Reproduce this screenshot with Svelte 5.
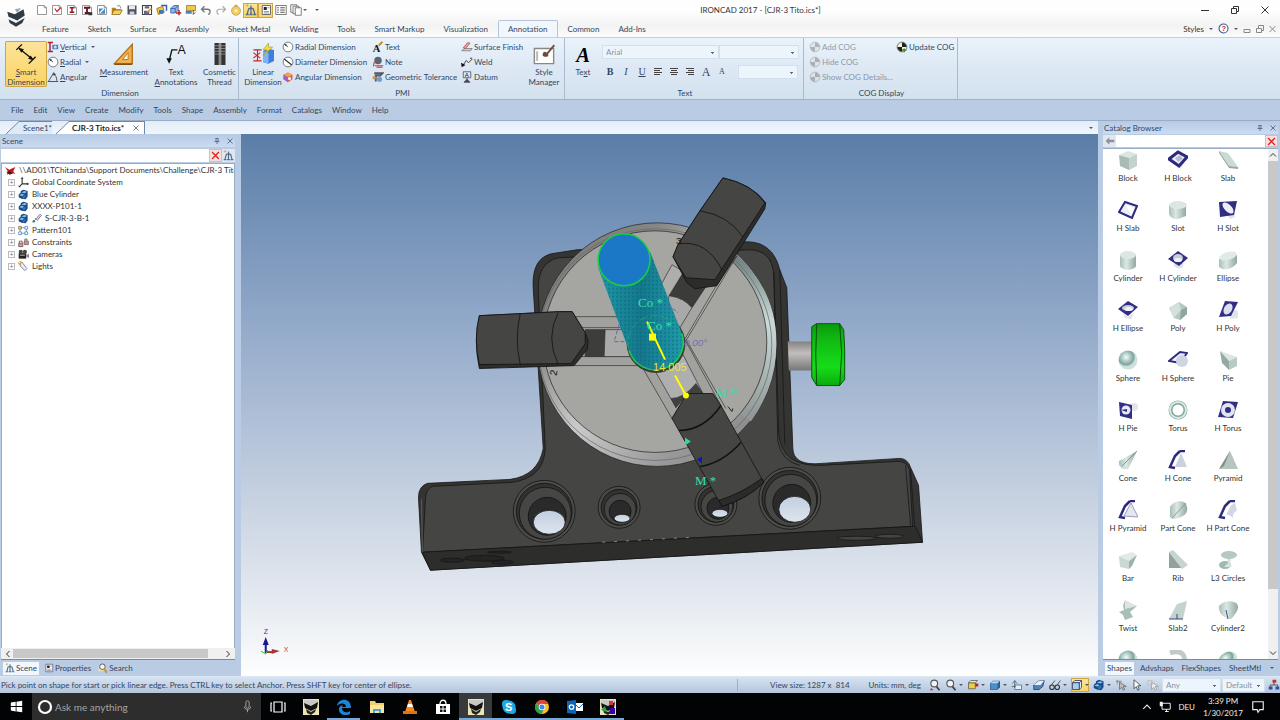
<script lang="ts">
    type Item = { icon: string; label: string; arrow?: boolean; disabled?: boolean };

    /*
     * small icons, 16 x 16
     */

    const cube =
        '<path d="M2 6l3-3h9v8l-3 3H2z" fill="#2d6aa8" stroke="#123c6b"/><path d="M2 6l3-3h9l-3 3z" fill="#bcdcf5"/><path d="M2 6h9v8H2z" fill="#4d8fcb"/>';
    const page =
        '<path d="M2 2h9l3 3v9H2z" fill="#fff" stroke="#777"/><path d="M11 2v3h3" fill="none" stroke="#777"/>';
    const part =
        '<path d="M1 8l3-3V3l4-2 6 2v8l-3 4-6-1-4-2z" fill="#174a86"/><path d="M5 5l4-2 4 1-3 2zM2 9l3-2 4 1-3 2z" fill="#8fc2ee"/><path d="M6 11l5-3v4l-3 2z" fill="#2c74bf"/>';
    const pie =
        '<circle cx="8" cy="8" r="6.5" fill="#ddd" stroke="#777"/><path d="M8 8V2a6 6 0 0 1 6 6zM8 8v6a6 6 0 0 1-6-6z" fill="#777"/>';
    const lens =
        '<circle cx="7" cy="6" r="4.5" fill="#eef5fb" stroke="#555" stroke-width="1.5"/><path d="M10 10l4 5" stroke="#444" stroke-width="2.5"/>';
    const hawk =
        '<path d="M0 0h16v16H0z" fill="#e9e5b9"/><path d="M1 1h14v4L8 8 1 4z" fill="#c9c9c4"/><path d="M1 4l7 3 7-4-1 6-6 3-6-3z" fill="#111"/><path d="M3 10l5 3 5-3-1 3-4 3-4-2z" fill="#222"/>';

    const icons: Record<string, string> = {
        logo: '<path d="M1 3l6 2 7-4 1 5-6 4-7-3z" fill="#2f3b45"/><path d="M2 9l6 3 7-4-2 4-5 3-5-3z" fill="#2f3b45"/><path d="M7 1l5-1-3 4z" fill="#9aa4ac"/>',
        page,
        pageCheck: page + '<path d="M5 6l3 4 5-5" fill="none" stroke="#c23" stroke-width="1.6"/>',
        pageI: page + '<path d="M5 5h6M5 11h6M8 5v6" stroke="#9b1420" stroke-width="2"/>',
        pageII: page + '<path d="M4 5h8M5 12h7M8 5v7" stroke="#68101a" stroke-width="2.4"/><path d="M10 11h5v4h-5z" fill="#333"/>',
        pageBlue: page + '<path d="M4 6h8v7H4z" fill="#3f8ccc"/><path d="M5 12l6-6" stroke="#fff" stroke-width="1.5"/>',
        open: '<path d="M1 5h5l1 2h6v6H1z" fill="#b98518"/><path d="M4 8h11l-3 6H1z" fill="#f5cf63" stroke="#8a6414"/><path d="M8 3c3-2 5 0 5 3" fill="none" stroke="#555"/>',
        save: '<path d="M2 2h12v12H2z" fill="#50525f"/><path d="M4 2h8v5H4z" fill="#e7e9f0"/><path d="M5 10h6v4H5z" fill="#cfd2dd"/>',
        saveAs: '<path d="M2 2h12v12H2z" fill="#fff" stroke="#445" stroke-width="1.5"/><path d="M5 3h6v3H5zM4 9h7v5H4z" fill="#667"/><path d="M8 11l6-5" stroke="#d7942a" stroke-width="2"/>',
        importIcon: '<path d="M1 6l8-3 2 8-8 3z" fill="#f4c542" stroke="#8a6a10"/><path d="M7 2h7v7" fill="none" stroke="#2b63ae" stroke-width="2"/><path d="M4 8h6v5H4z" fill="#3f76bd"/>',
        addPart: '<path d="M1 6l4-4h6v6l-4 4H1z" fill="#8db7e8" stroke="#2a55a0"/><path d="M1 6h6v6M7 6l4-4" fill="none" stroke="#2a55a0"/><path d="M12 8v7M8 12h7" stroke="#b22" stroke-width="2"/>',
        library: '<path d="M2 2h12v7H2z" fill="#f3c646" stroke="#94741c"/><path d="M1 9h8v4H1z" fill="#4c83bf"/><path d="M11 8v6l3-3" fill="none" stroke="#333"/>',
        undo: '<path d="M6 3L2 7l4 4M2 7h8c5 0 4 6 1 7" fill="none" stroke="#777" stroke-width="1.8"/>',
        redo: '<path d="M10 3l4 4-4 4M14 7H6c-5 0-4 6-1 7" fill="none" stroke="#aaa" stroke-width="1.6"/>',
        ball: '<circle cx="8" cy="9" r="6" fill="#f4cc62" stroke="#c09a3c"/><circle cx="8" cy="9" r="2" fill="#fff3c6"/><path d="M6 1h4v3H6z" fill="#c8a95a"/>',
        tree: '<path d="M8 2v4M5 6h6M5 6l-2 7M8 6v7M11 6l2 7M1 14h4M6 14h4M11 14h4" fill="none" stroke="#4a6c8e" stroke-width="1.7"/><path d="M1 2h4M3 0v4" stroke="#e3a51c"/>',
        props: '<path d="M3 2h11v12H3z" fill="#fff" stroke="#445"/><path d="M5 4h4v4H5z" fill="#223"/><path d="M10 5h3M5 10h7M5 12h7" stroke="#778"/>',
        list: '<path d="M1 2h14v12H1z" fill="#fff" stroke="#555"/><path d="M3 5h2M3 8h2M3 11h2M7 5h6M7 8h6M7 11h6" stroke="#555" stroke-width="1.4"/>',
        copy: '<path d="M1 1h8v10H1z" fill="#fff" stroke="#555"/><path d="M4 3h8v10H4z" fill="#fff" stroke="#555"/><path d="M7 5h8v10H7z" fill="#fff" stroke="#555"/>',
        smart: '<path d="M3 4l10 8" stroke="#111" stroke-width="1"/><path d="M1 5l4-4M10 15l5-5" stroke="#111" stroke-width="1"/><path d="M2.500 3.500l4 1-2 2.500zM13.500 12.500l-4-1 2-2.500z" fill="#111"/>',
        vertical: '<path d="M1 2h7M1 14h7M4 2v12" stroke="#b2232a" stroke-width="2"/><path d="M7 5h8v6H7z" fill="#4d82bb"/><circle cx="11" cy="8" r="2" fill="#c6def5"/>',
        radial: '<circle cx="8" cy="8" r="6.500" fill="#fff" stroke="#555"/><path d="M8 8L3 4" stroke="#333"/><path d="M3 4l4 1-2 2z" fill="#333"/>',
        diameter: '<circle cx="8" cy="8" r="6.500" fill="#fff" stroke="#555"/><path d="M3 4l10 8" stroke="#333" stroke-width="1.500"/>',
        angular: '<path d="M1 14h14M2 14l7-12M9 4c3 2 4 5 4 9" fill="none" stroke="#444" stroke-width="1.200"/><path d="M9 2l3 3-4 1z" fill="#333"/>',
        measure: '<path d="M1 15L14 1v14z" fill="#f0b24e" stroke="#b36f15"/><path d="M7 12l4-5v5z" fill="#fdf3d9" stroke="#b36f15" stroke-width=".6"/><path d="M1 15h13v1H1z" fill="#84500f"/>',
        annotate: '<text x="9" y="8" font-size="9" font-family="Liberation Sans, sans-serif" fill="#111">A</text><path d="M9 5H5L3 13" fill="none" stroke="#111"/><path d="M1 11h4l-2 4z" fill="#111"/>',
        thread: '<path d="M4 0h8v16H4z" fill="#333"/><path d="M7 0h2v16H7z" fill="#888"/><path d="M4 2h8M4 4h8M4 6h8M4 8h8" stroke="#aaa" stroke-width=".5"/>',
        linear: '<path d="M8 6l3-2 5 1v8l-4 2-4-1z" fill="#3c7ee0"/><path d="M8 6l4 1v8l-4-1z" fill="#80b2f5"/><path d="M12 0L8 5h3L8 9l7-6h-3z" fill="#f7df3c" stroke="#a08a10" stroke-width=".4"/><path d="M1 5h6M1 13h6M4 5v8M1 7l5 4M6 7l-5 4" stroke="#c22" stroke-width=".8" fill="none"/>',
        angDim: '<path d="M2 5l6-3 6 3v6l-6 4-6-4z" fill="#d86262"/><path d="M2 5l6 3v7l-6-4z" fill="#9c62c4"/><path d="M8 2l6 3-6 3-6-3z" fill="#f4a33f"/><circle cx="10" cy="10" r="2" fill="#fff"/>',
        textA: '<text x="1" y="14" font-size="14" font-weight="700" font-family="Liberation Serif, serif" fill="#111">A</text><path d="M9 6l5-5" stroke="#c58b2c" stroke-width="2.500"/>',
        note: '<circle cx="8" cy="6" r="5" fill="#5a6674"/><path d="M3 8l-1 6M4 13h11M6 15h8" stroke="#c33" stroke-width="1.500"/>',
        tolerance: '<path d="M3 3h11l-3 3H5v8" fill="none" stroke="#556" stroke-width="2.500"/><circle cx="10" cy="11" r="3.500" fill="#6ea0d0"/><path d="M1 7h4v4H1z" fill="#c69a3a"/>',
        surface: '<path d="M1 13h12l2-3H4z" fill="#ccc" stroke="#777"/><path d="M3 9l6-7 3 1-6 7z" fill="#e9a39a" stroke="#b44"/>',
        weld: '<path d="M3 12l4-6 3 3 5-5M12 3h3" fill="none" stroke="#333" stroke-width="1.200"/><path d="M0 9l6 3-5 3z" fill="#111"/>',
        datum: '<path d="M3 1h10v8H3z" fill="#dfe8f3" stroke="#445"/><text x="5" y="8" font-size="8" font-family="Liberation Sans, sans-serif" fill="#111">A</text><path d="M8 9v3M4 15l4-4 4 4z" fill="#445" stroke="#445"/>',
        styleMgr: '<path d="M1 4h14v11H1z" fill="#fff" stroke="#888"/><path d="M3 6v7" stroke="#bbb" stroke-width="1.500"/><path d="M7 9c0-3 2-3 3-2l5-6 1 1-5 6c1 2-2 3-4 1z" fill="#6d4c3d"/>',
        bigA: '<text x="3" y="14" font-size="15" font-weight="700" font-style="italic" font-family="Liberation Serif, serif" fill="#000">A</text>',
        cog: pie,
        cogColor: '<circle cx="8" cy="8" r="6.500" fill="#f2f2d8" stroke="#555"/><path d="M8 8V2a6 6 0 0 1 6 6zM8 8v6a6 6 0 0 1-6-6z" fill="#222"/><path d="M11 10v5M8 12h6" stroke="#4b8a34" stroke-width="2"/>',
        scene: '<path d="M0 3l6 4 9-4-3 6 3 4-6-2-6 3 1-5z" fill="#c3161c"/><path d="M2 10l5-1 5 3-5 2z" fill="#5c0e10"/>',
        axes: '<path d="M6 1v9M6 10h9M6 10l-4 4" stroke="#333" stroke-width="1.600"/><path d="M4 3l2-3 2 3zM13 8l3 2-3 2zM1 12v3h3z" fill="#333"/>',
        part,
        pin: '<path d="M1 15l5-5M5 8l4 4M7 9l4-5 2-2 2 2-2 2-4 5" fill="#eef" stroke="#445" stroke-width="1.200"/><circle cx="3" cy="13" r="2" fill="#386"/>',
        pattern: '<path d="M1 2h4v4H1z" fill="#f4d54a" stroke="#765"/><path d="M10 2h4v4h-4zM1 10h4v4H1zM10 10h4v4h-4z" fill="#fff" stroke="#37b"/><path d="M5 4h5M3 6v4M12 6v4M5 12h5" stroke="#37b"/>',
        constraints: '<path d="M1 9h6v5H1zM9 6h6v5H9z" fill="#c99" stroke="#644"/><path d="M2 9V6h4v3M10 6V3h3v3" fill="none" stroke="#755" stroke-width="1.300"/>',
        camera: '<path d="M1 6h11v8H1z" fill="#222"/><circle cx="4" cy="4" r="3" fill="#444"/><circle cx="10" cy="4" r="3" fill="#444"/><path d="M12 9l4-2v6l-4-2zM3 8h7v2H3z" fill="#888"/>',
        light: '<path d="M3 3l3-1 7 9-3 3-6-6z" fill="#e8edf5" stroke="#567"/><path d="M0 2l4 5M2 0l5 3" stroke="#d9a326" stroke-width="1.500"/>',
        redX: '<path d="M3 3l10 10M13 3L3 13" stroke="#d3282b" stroke-width="2"/>',
        back: '<path d="M1 8l6-6v4h8v4H7v4z" fill="#8d9196"/>',
        pinSmall: '<path d="M5 3h6M6 3v6M10 3v6M3 9h10M8 9v5" stroke="#445a75" stroke-width="1.500" fill="none"/>',
        close: '<path d="M3 3l10 10M13 3L3 13" stroke="#445a75" stroke-width="1.600"/>',
        search: '<path d="M1 4h7v9H1z" fill="#f3e6c0"/>' + lens + '<path d="M9 9l5 6" stroke="#d79a2b" stroke-width="3"/>',
        lens,
        zoomIn: lens + '<path d="M3 12l-2 3h5z" fill="#c33"/>',
        sceneCam: '<path d="M2 5h9v8H2z" fill="#f0cf3c" stroke="#555"/><path d="M2 5l3-3h9l-3 3z" fill="#fbeea2" stroke="#555"/><path d="M11 6h4v4h-4z" fill="#b22"/>',
        cube,
        move: '<path d="M5 8h9v6H5z" fill="#e6eef7" stroke="#567"/><path d="M5 12V3M2 6l3-4 3 4M1 10h5" fill="none" stroke="#356"/>',
        wedge: '<path d="M1 8l6-5 8-1-2 8-5 4H1z" fill="#4b86bf" stroke="#234"/><path d="M1 8l6-5 8-1-5 6z" fill="#e7f1fb"/>',
        glasses: '<circle cx="4" cy="11" r="3" fill="none" stroke="#333" stroke-width="1.500"/><circle cx="11" cy="11" r="3" fill="none" stroke="#333" stroke-width="1.500"/><path d="M3 8l5-6M11 8l4-6" stroke="#333"/>',
        cubeEdge: '<path d="M2 5l3-3h9v9l-3 3V5zM11 5l3-3" fill="#d8ebfb" stroke="#235"/><path d="M2 5h9v9H2z" fill="#a9cdee" stroke="#235"/>',
        select: '<path d="M1 3h8M3 1v6" stroke="#777"/><path d="M6 4v10l3-3 2 4 2-1-2-4h4z" fill="#bbb" stroke="#666"/>',
        cursor: '<path d="M4 1v12l3-3 2 5 2-1-2-5h4z" fill="#fff" stroke="#333"/>',
        filter: '<path d="M6 4v10l3-3 2 4 2-1-2-4h4z" fill="#eee" stroke="#999"/><path d="M1 2h6v6H1z" fill="none" stroke="#bbb"/>',
        org: '<path d="M6 1h5v4H6z" fill="#b33"/><path d="M1 10h5v4H1zM10 10h5v4h-5z" fill="#2c4da0"/><path d="M8 5v3M3 10V8h10v2" fill="none" stroke="#333"/>',
        help: '<circle cx="8" cy="8" r="6.500" fill="#fff" stroke="#345a9b" stroke-width="1.600"/><text x="5" y="12" font-size="11" font-weight="700" font-family="Liberation Sans, sans-serif" fill="#c22">?</text>',
        windows: '<path d="M1 3l6-1v5.500H1zM8 2l7-1v6.500H8zM1 8.500h6V14l-6-1zM8 8.500h7V15l-7-1z" fill="#fff"/>',
        ring: '<circle cx="8" cy="8" r="6" fill="none" stroke="#fff" stroke-width="2.200"/>',
        mic: '<rect x="6" y="1" width="4" height="9" rx="2" fill="none" stroke="#bbb"/><path d="M4 8c0 5 8 5 8 0M8 12v3" fill="none" stroke="#bbb"/>',
        taskView: '<path d="M4 3h8v10H4zM2 4H1v8h1M14 4h1v8h-1" fill="none" stroke="#fff" stroke-width="1.200"/>',
        hawk,
        hawkColor: hawk + '<path d="M10 9h5v6h-5z" fill="#30a"/><path d="M1 11l4-4 2 6z" fill="#2a4"/><path d="M9 2h4v4H9z" fill="#d33"/>',
        edge: '<path d="M1 7c1-8 14-9 14 2H6c0 5 6 5 8 3v3c-5 3-12 0-11-6 1-2 3-3 4-3-1 1-1 2-1 2h4c0-5-7-4-9-1z" fill="#1787dc"/>',
        folder: '<path d="M1 2h5l1 2h8v10H1z" fill="#f2cf6c"/><path d="M1 6h14v8H1z" fill="#fbe59b"/><path d="M4 10h8v4h-2v-2H6v2H4z" fill="#4ba4dc"/>',
        vlc: '<path d="M7 1h2l4 12H3z" fill="#f28a1e"/><path d="M6 5h4l1 3H5z" fill="#fff"/><path d="M1 12h14v3H1z" fill="#e5700e"/>',
        store: '<path d="M1 5h14v10H1z" fill="#fff"/><path d="M5 5c0-5 6-5 6 0" fill="none" stroke="#fff" stroke-width="1.300"/><path d="M5 7h2.500v2.500H5zM8.500 7H11v2.500H8.500zM5 10.500h2.500V13H5zM8.500 10.500H11V13H8.500z" fill="#111"/>',
        skype: '<circle cx="8" cy="8" r="6.500" fill="#1ca8e8"/><circle cx="5" cy="5" r="4" fill="#1ca8e8"/><circle cx="11" cy="11" r="4" fill="#1ca8e8"/><text x="4" y="12" font-size="11" font-weight="700" font-family="Liberation Sans, sans-serif" fill="#fff">S</text>',
        chrome: '<circle cx="8" cy="8" r="7" fill="#fbc116"/><path d="M8 8L2 4.500A7 7 0 0 1 14.500 5H8z" fill="#df4435"/><path d="M8 8L1.800 4.700A7 7 0 0 0 7.500 15L10 10z" fill="#2da14f"/><circle cx="8" cy="8" r="3.300" fill="#fff"/><circle cx="8" cy="8" r="2.500" fill="#4285f4"/>',
        outlook: '<path d="M8 4h8v8H8z" fill="#fff"/><path d="M8 5l4 4 4-4" fill="none" stroke="#0b66b8"/><path d="M0 2l9-1v14l-9-1z" fill="#0b66b8"/><circle cx="4.500" cy="8" r="2.200" fill="none" stroke="#fff" stroke-width="1.300"/>',
        up: '<path d="M2 11l6-6 6 6" fill="none" stroke="#eee" stroke-width="1.800"/>',
        net: '<path d="M4 3h11v8H4zM8 14h5M10 11v3" fill="none" stroke="#eee" stroke-width="1.300"/><path d="M1 1h4v6H1z" fill="#eee"/>',
        notice: '<path d="M2 2h12v9h-4l-2 3-1-3H2z" fill="none" stroke="#eee" stroke-width="1.300"/>',
    };

    /*
     * catalog shapes, 20 x 20
     */

    const frame = '<path d="M1 9L10 2l9 5-8 9z" fill="#eceefa" stroke="#2c2a7c" stroke-width="3"/>';
    const hollow = '<path d="M1 2l18-1-3 14-14 2z" fill="#312e84"/>';
    const wall = '<path d="M12 1h5M12 1L7 6 2 17l5 1" fill="none" stroke="#2c2a7c" stroke-width="2.500"/>';

    const shapes = [
        { name: "Block", art: '<path d="M1 5l9-4 9 3-8 4z" fill="#dbe5e1"/><path d="M1 5l10 3v12L2 16z" fill="#a8bbb5"/><path d="M11 8l8-4v12l-8 4z" fill="#c3d2cc"/>' },
        { name: "H Block", art: '<path d="M9 12l4 7 5-10z" fill="#e4e6ee"/>' + frame + '<path d="M7 8l5-3 3 4-5 3z" fill="#b7bccb"/>' },
        { name: "Slab", art: '<path d="M1 1l9 2 10 14-9-1z" fill="#cbdad4"/><path d="M1 1v2l10 15v-2zM11 16l9 1v2l-9-1z" fill="#93a9a1"/>' },
        { name: "H Slab", art: '<path d="M7 2l12 4-5 12L1 12z" fill="#eceefa" stroke="#2c2a7c" stroke-width="2"/><path d="M8 5l8 3-3 7z" fill="#fff"/>' },
        { name: "Slot", art: '<path d="M1 5v9c2 5 6 5 9 5l8-3V6z" fill="url(#steel)"/><ellipse cx="10" cy="5" rx="9" ry="4" fill="#dce7e2"/>' },
        { name: "H Slot", art: '<path d="M9 14l3 5 5-2-1-5z" fill="#dfe2ea"/>' + hollow + '<ellipse cx="10" cy="8" rx="7" ry="3.500" transform="rotate(45 10 8)" fill="#eceefa"/>' },
        { name: "Cylinder", art: '<path d="M2 5v11c2 5 14 5 16 0V5z" fill="url(#steel)"/><ellipse cx="10" cy="5" rx="8" ry="4" fill="#dce7e2"/>' },
        { name: "H Cylinder", art: '<path d="M6 10h9v7q-5 3-9-1z" fill="#dddfea"/><path d="M0 9l10-8 10 7-9 8z" fill="#312e84"/><ellipse cx="10" cy="8" rx="5" ry="4" fill="#c9ccd9"/><ellipse cx="10" cy="10" rx="4" ry="2" fill="#f2f3f8"/>' },
        { name: "Ellipse", art: '<path d="M1 9v8c6 5 14 1 18-4V5z" fill="url(#steel)"/><ellipse cx="10" cy="6" rx="9" ry="4" transform="rotate(-15 10 6)" fill="#e0eae6"/>' },
        { name: "H Ellipse", art: '<path d="M5 13l5 4 6-4-3 6-6-1z" fill="#dddfea"/><path d="M0 9l10-8 10 6-10 9z" fill="#312e84"/><ellipse cx="10" cy="8" rx="6" ry="3" fill="#c9ccd9"/><ellipse cx="11" cy="9" rx="4" ry="2" fill="#f2f3f8"/>' },
        { name: "Poly", art: '<path d="M1 8l10-6 8 5v7l-7 6-6-2z" fill="#b4c7c0"/><path d="M1 8l10-6 2 8-7 8z" fill="#d3e0db"/><path d="M13 10l6-3v7l-7 6z" fill="#8fa59d"/>' },
        { name: "H Poly", art: '<path d="M13 9l7 2v7l-8 1z" fill="#e2e4ec"/><path d="M7 1l13 1-7 14-12 1z" fill="#312e84"/><ellipse cx="10" cy="9" rx="4" ry="6" transform="rotate(30 10 9)" fill="#dcdfee"/>' },
        { name: "Sphere", art: '<circle cx="10" cy="10" r="9.500" fill="url(#ball)"/>' },
        { name: "H Sphere", art: '<path d="M1 11L12 2l7 1-7 10z" fill="#eef" stroke="#2c2a7c" stroke-width="2"/><circle cx="14" cy="11" r="6" fill="#d0d4e2"/>' },
        { name: "Pie", art: '<path d="M2 1l17 6-8 4z" fill="#dbe6e1"/><path d="M2 1l9 10v9L4 13z" fill="#94aaa2"/><path d="M11 11l8-4v9l-8 4z" fill="#b9cac4"/>' },
        { name: "H Pie", art: '<circle cx="16" cy="7" r="4" fill="#e3e4e8"/><path d="M1 2l13 3v14L2 16z" fill="#312e84"/><circle cx="8" cy="10" r="4.500" fill="#e7e9f4"/><path d="M3 10l6-1v3z" fill="#312e84"/>' },
        { name: "Torus", art: '<circle cx="10" cy="10" r="7.500" fill="none" stroke="#7fa59b" stroke-width="4"/><circle cx="10" cy="10" r="8" fill="none" stroke="#d9e9e4" stroke-width="2"/>' },
        { name: "H Torus", art: '<path d="M5 1l15 1-5 16-15-1z" fill="#312e84"/><circle cx="10" cy="10" r="5" fill="none" stroke="#e2e4f0" stroke-width="4"/>' },
        { name: "Cone", art: '<path d="M19 1L1 11c-1 6 4 9 9 8z" fill="url(#steel)"/><path d="M19 1L4 16" stroke="#7f9b92"/>' },
        { name: "H Cone", art: wall + '<path d="M13 3L7 17h12z" fill="#ccd1e2"/>' },
        { name: "Pyramid", art: '<path d="M12 1L1 19h19z" fill="#b8c4bf"/><path d="M12 1L1 19l5-3z" fill="#7f918a"/>' },
        { name: "H Pyramid", art: wall + '<path d="M13 3L6 16l14 1z" fill="#e5e7f0" stroke="#9a9cba"/>' },
        { name: "Part Cone", art: '<path d="M2 7C6 0 16 0 18 4s2 9-3 12-11 4-13 1z" fill="url(#steel)"/><path d="M18 3L4 18" stroke="#86a198"/>' },
        { name: "H Part Cone", art: wall + '<path d="M17 3c-5 2-5 5-9 12 4-1 5 2 7 3 0-5 2-7 4-7z" fill="#d3d6e4"/>' },
        { name: "Bar", art: '<path d="M1 6l13-4 5 3-8 6z" fill="#e1eae6"/><path d="M1 6l10 5v8L2 17z" fill="#c9d8d3"/><path d="M11 11l8-6-5 11-3 3z" fill="#9fb3ac"/>' },
        { name: "Rib", art: '<path d="M1 2l13 16H1z" fill="#91a29c"/><path d="M1 2l4-2 15 15-6 4z" fill="#c8d4cf"/>' },
        { name: "L3 Circles", art: '<ellipse cx="7" cy="15" rx="6" ry="4" fill="#9fbab1"/><path d="M9 8h4l-1 5 2 4H6l4-4z" fill="#d7e3df"/><ellipse cx="11" cy="5" rx="8" ry="4" fill="#b5c8c1"/>' },
        { name: "Twist", art: '<path d="M7 0l3 4 9 2-7 6 3 5-8 3-2-5-4-3 5-2-1-4z" fill="#a9beb6"/><path d="M7 0l12 6-12 3z" fill="#dbe6e1"/>' },
        { name: "Slab2", art: '<path d="M9 4l10-3-4 18H1z" fill="#c4d3ce"/><path d="M1 19h14M9 19v-5" stroke="#38447f"/>' },
        { name: "Cylinder2", art: '<path d="M1 6C5 0 16 0 19 4s-1 10-6 15C6 19 0 13 1 6z" fill="url(#steel)"/><path d="M8 10l2 9" stroke="#414b96"/>' },
        { name: "", art: '<circle cx="10" cy="10" r="9.500" fill="url(#ball)"/>' },
        { name: "", art: '<path d="M2 3c12-4 17 2 14 15" fill="none" stroke="#c1cbc7" stroke-width="5"/>' },
        { name: "", art: '<ellipse cx="10" cy="9" rx="9.500" ry="7" transform="rotate(-25 10 9)" fill="url(#ball)"/>' },
    ];

    const quickAccess = ["page", "pageCheck", "pageI", "pageII", "pageBlue", "open", "save", "saveAs", "importIcon", "addPart", "library", "undo", "redo", "ball", "tree", "props", "list", "copy"];
    const ribbonTabs = ["Feature", "Sketch", "Surface", "Assembly", "Sheet Metal", "Welding", "Tools", "Smart Markup", "Visualization", "Annotation", "Common", "Add-Ins"];
    const menus = ["File", "Edit", "View", "Create", "Modify", "Tools", "Shape", "Assembly", "Format", "Catalogs", "Window", "Help"];

    const dimensions: Item[] = [
        { icon: "vertical", label: "&Vertical", arrow: true },
        { icon: "radial", label: "&Radial", arrow: true },
        { icon: "angular", label: "&Angular" },
    ];
    const pmi: Item[][] = [
        [
            { icon: "radial", label: "Radial Dimension" },
            { icon: "diameter", label: "Diameter Dimension" },
            { icon: "angDim", label: "Angular Dimension" },
        ],
        [
            { icon: "textA", label: "Text" },
            { icon: "note", label: "Note" },
            { icon: "tolerance", label: "Geometric Tolerance" },
        ],
        [
            { icon: "surface", label: "Surface Finish" },
            { icon: "weld", label: "Weld" },
            { icon: "datum", label: "Datum" },
        ],
    ];
    const cog: Item[][] = [
        [
            { icon: "cog", label: "Add COG", disabled: true },
            { icon: "cog", label: "Hide COG", disabled: true },
            { icon: "cog", label: "Show COG Details...", disabled: true },
        ],
        [{ icon: "cogColor", label: "Update COG" }],
    ];

    const nodes = [
        { icon: "axes", label: "Global Coordinate System" },
        { icon: "part", label: "Blue Cylinder" },
        { icon: "part", label: "XXXX-P101-1" },
        { icon: "part", label: "S-CJR-3-B-1", pinned: true },
        { icon: "pattern", label: "Pattern101" },
        { icon: "constraints", label: "Constraints" },
        { icon: "camera", label: "Cameras" },
        { icon: "light", label: "Lights" },
    ];

    const viewTools = [
        { icon: "zoomIn" },
        { icon: "lens", arrow: true },
        { icon: "sceneCam", arrow: true },
        { icon: "cube", arrow: true },
        { icon: "move", arrow: true },
        { icon: "wedge" },
        { icon: "glasses", arrow: true },
        { icon: "cubeEdge", arrow: true, on: true },
        { icon: "part", arrow: true },
        { icon: "select" },
        { icon: "cursor" },
        { icon: "filter" },
    ];

    const apps = [
        { icon: "taskView" },
        { icon: "hawk" },
        { icon: "edge", running: true },
        { icon: "folder" },
        { icon: "vlc" },
        { icon: "store" },
        { icon: "hawk", running: true, active: true },
        { icon: "skype", running: true },
        { icon: "chrome", running: true },
        { icon: "outlook", running: true },
        { icon: "hawkColor", running: true },
    ];

    const holes = [
        { x: 544, y: 512, r: 31, ix: 547, iy: 517, ir: 19, wx: 549, wy: 523, rx: 16, ry: 12 },
        { x: 619, y: 508, r: 21, ix: 620, iy: 512, ir: 11, wx: 622, wy: 519, rx: 8, ry: 4 },
        { x: 716, y: 505, r: 21, ix: 718, iy: 509, ir: 11, wx: 720, wy: 514, rx: 8, ry: 4 },
        { x: 790, y: 499, r: 31, ix: 792, iy: 504, ir: 19, wx: 795, wy: 510, rx: 16, ry: 13 },
    ];

    let activeTab = $state("Annotation");
</script>

{#snippet icon(name: string, size = 12)}
    <svg class="icon" width={size} height={size} viewBox="0 0 16 16" aria-hidden="true">{@html icons[name]}</svg>
{/snippet}

{#snippet caption(text: string)}
    {@const at = text.indexOf("&")}
    {#if at < 0}{text}{:else}{text.slice(0, at)}<u>{text[at + 1]}</u>{text.slice(at + 2)}{/if}
{/snippet}

{#snippet large(name: string, lines: string[], on = false)}
    <button class="large" class:on>
        {@render icon(name, 22)}
        <span>
            {#each lines as line, i}
                {#if i}<br />{/if}{@render caption(line)}
            {/each}
        </span>
    </button>
{/snippet}

{#snippet stack(items: Item[])}
    <div class="stack">
        {#each items as item}
            <button class="small" disabled={item.disabled}>
                {@render icon(item.icon)}
                <span>{@render caption(item.label)}</span>
                {#if item.arrow}<i class="arrow"></i>{/if}
            </button>
        {/each}
    </div>
{/snippet}

<div class="app">
    <header>
        <div class="logo">{@render icon("logo", 20)}</div>
        <div class="head-rows">
            <div class="title-row">
                <div class="quick">
                    {#each quickAccess as name}
                        <button class:on={name === "tree" || name === "props"} aria-label={name}>{@render icon(name)}</button>
                    {/each}
                    <i class="arrow"></i>
                    <i class="arrow more"></i>
                </div>
                <h1>IRONCAD 2017 - [CJR-3 Tito.ics*]</h1>
                <div class="window-buttons">
                    <button aria-label="Minimize"><svg width="8" height="8"><path d="M0 4.500h8" stroke="#333" /></svg></button>
                    <button aria-label="Restore"><svg width="8" height="8"><path d="M.5 2.500h5v5h-5zM2.500 2V.5h5v5H6" fill="none" stroke="#333" /></svg></button>
                    <button aria-label="Close"><svg width="8" height="8"><path d="M.5.5l7 7M7.500.5l-7 7" stroke="#333" /></svg></button>
                </div>
            </div>
            <nav class="ribbon-tabs">
                {#each ribbonTabs as tab}
                    <button class:active={tab === activeTab} onclick={() => (activeTab = tab)}>{tab}</button>
                {/each}
                <div class="styles">
                    <button>Styles</button>
                    <i class="arrow"></i>
                    {@render icon("help", 11)}
                    <i class="arrow"></i>
                    <svg width="34" height="8"><path d="M1 4.500h6v3H1zM13.500 3.500h5v4h-5zM15.500 3V.5h5v5H19M26.500 1l6 6M32.500 1l-6 6" fill="none" stroke="#888" /></svg>
                </div>
            </nav>
        </div>
    </header>

    <section class="ribbon">
        <div class="group dimension">
            <div class="items">
                {@render large("smart", ["&Smart", "Dimension"], true)}
                {@render stack(dimensions)}
                {@render large("measure", ["&Measurement"])}
                {@render large("annotate", ["Text", "&Annotations"])}
                {@render large("thread", ["Cosmetic", "Thread"])}
            </div>
            <h2>Dimension</h2>
        </div>
        <div class="group pmi">
            <div class="items">
                {@render large("linear", ["Linear", "Dimension"])}
                {#each pmi as items}
                    {@render stack(items)}
                {/each}
                {@render large("styleMgr", ["Style", "Manager"])}
            </div>
            <h2>PMI</h2>
        </div>
        <div class="group text">
            <div class="items">
                {@render large("bigA", ["Te&xt"])}
                <div class="font-box">
                    <div class="font-row">
                        <select class="family" aria-label="Font"><option>Arial</option></select>
                        <select class="size" aria-label="Font size"><option></option></select>
                    </div>
                    <div class="font-row">
                        <button><b>B</b></button>
                        <button><em>I</em></button>
                        <button><u>U</u></button>
                        <button aria-label="Align left"><svg width="8" height="8"><path d="M0 .5h8M0 2.500h6M0 4.500h8M0 6.500h6" stroke="#444" /></svg></button>
                        <button aria-label="Align center"><svg width="8" height="8"><path d="M0 .5h8M1 2.500h6M0 4.500h8M1 6.500h6" stroke="#444" /></svg></button>
                        <button aria-label="Align right"><svg width="8" height="8"><path d="M0 .5h8M2 2.500h6M0 4.500h8M2 6.500h6" stroke="#444" /></svg></button>
                        <button class="grow">A</button>
                        <button class="shrink">A</button>
                        <select class="color" aria-label="Text colour"><option></option></select>
                    </div>
                </div>
            </div>
            <h2>Text</h2>
        </div>
        <div class="group cog">
            <div class="items">
                {#each cog as items}
                    {@render stack(items)}
                {/each}
            </div>
            <h2>COG Display</h2>
        </div>
    </section>

    <nav class="menu-bar">
        {#each menus as menu}
            <button>{menu}</button>
        {/each}
    </nav>

    <main>
        <div class="documents">
            <div class="doc-tabs">
                <svg width="23" height="13"><path d="M6 13L19 1h4v12z" fill="#dfeaf7" /><path d="M6 13L19 .5h4" fill="none" stroke="#6d87a6" /></svg>
                <button class="doc">Scene1*</button>
                <svg width="20" height="13"><path d="M4 13L17 1h3v12z" fill="#fff" /><path d="M4 13L17 .5h3" fill="none" stroke="#6d87a6" /></svg>
                <button class="doc active">CJR-3 Tito.ics* {@render icon("close", 8)}</button>
                <i class="arrow"></i>
            </div>

            <div class="work">
                <aside class="scene">
                    <div class="panel-title">
                        <span>Scene</span>
                        {@render icon("pinSmall", 8)}
                        {@render icon("close", 8)}
                    </div>
                    <div class="find">
                        <input type="text" aria-label="Find in scene" />
                        <button class="clear" aria-label="Clear">{@render icon("redX", 11)}</button>
                        <button aria-label="Tree">{@render icon("tree", 11)}</button>
                    </div>
                    <div class="tree">
                        <div class="root">{@render icon("scene", 11)} \\AD01\TChitanda\Support Documents\Challenge\CJR-3 Tito.ics</div>
                        <ul>
                            {#each nodes as node}
                                <li>
                                    <button class="expand" aria-label="Expand {node.label}">+</button>
                                    {@render icon(node.icon, 11)}
                                    {#if node.pinned}{@render icon("pin", 10)}{/if}
                                    <span>{node.label}</span>
                                </li>
                            {/each}
                        </ul>
                    </div>
                    <div class="scroll-x">
                        <svg width="6" height="8"><path d="M4.500 1l-3 3 3 3" fill="none" stroke="#333" /></svg>
                        <div class="thumb"></div>
                        <svg width="6" height="8"><path d="M1.500 1l3 3-3 3" fill="none" stroke="#333" /></svg>
                    </div>
                    <div class="panel-tabs">
                        <button class="active">{@render icon("tree", 10)} Scene</button>
                        <button>{@render icon("props", 10)} Properties</button>
                        <button>{@render icon("search", 10)} Search</button>
                    </div>
                </aside>

                <div class="viewport">
                    <svg viewBox="241 134 857 543" role="img" aria-label="Chuck assembly">
                        <defs>
                            <linearGradient id="rim" x1="0" y1="0" x2="1" y2="1">
                                <stop offset="0" stop-color="#777775" />
                                <stop offset=".25" stop-color="#858583" />
                                <stop offset=".5" stop-color="#c9cac9" />
                                <stop offset=".75" stop-color="#9a9a9c" />
                                <stop offset="1" stop-color="#7c7c7c" />
                            </linearGradient>
                            <linearGradient id="rimSide" x1="0" y1="0" x2="0" y2="1">
                                <stop offset="0" stop-color="#6d7c7c" />
                                <stop offset=".4" stop-color="#cadbd9" />
                                <stop offset="1" stop-color="#8e9594" />
                            </linearGradient>
                            <linearGradient id="shaft" x1="0" y1="0" x2="0" y2="1">
                                <stop offset="0" stop-color="#858383" />
                                <stop offset=".4" stop-color="#c2bebd" />
                                <stop offset="1" stop-color="#777" />
                            </linearGradient>
                            <linearGradient id="knob" x1="0" y1="0" x2="0" y2="1">
                                <stop offset="0" stop-color="#079a09" />
                                <stop offset=".25" stop-color="#11b913" />
                                <stop offset=".7" stop-color="#16dc18" />
                                <stop offset="1" stop-color="#0bab0d" />
                            </linearGradient>
                            <linearGradient id="steel">
                                <stop offset="0" stop-color="#a9beb7" />
                                <stop offset=".4" stop-color="#dce8e4" />
                                <stop offset="1" stop-color="#91a8a0" />
                            </linearGradient>
                            <radialGradient id="ball" cx=".4" cy=".35">
                                <stop offset="0" stop-color="#f2fbfa" />
                                <stop offset=".5" stop-color="#a9c6c1" />
                                <stop offset=".8" stop-color="#7fa39d" />
                                <stop offset="1" stop-color="#cfe0dc" />
                            </radialGradient>
                            <linearGradient id="pipe" x1="0" y1="0" x2="1" y2="0">
                                <stop offset="0" stop-color="#1e9aa6" />
                                <stop offset=".5" stop-color="#14788c" />
                                <stop offset="1" stop-color="#1f9cac" />
                            </linearGradient>
                            <pattern id="mesh" width="4" height="4" patternUnits="userSpaceOnUse">
                                <path d="M0 0h2v2H0z" fill="#0d5f74" fill-opacity=".45" />
                            </pattern>
                            <linearGradient id="gap" x1="0" y1="0" x2="0" y2="1">
                                <stop offset="0" stop-color="#c2cfdf" />
                                <stop offset="1" stop-color="#dde4ee" />
                            </linearGradient>
                        </defs>

                        <!-- base plate -->
                        <g stroke="#161616" stroke-width=".8" stroke-linejoin="round">
                            <path d="M418 498q0-11 9-14l83-4q28-4 33-31l-10-160q-2-30 18-35l26-4 170-8q26 0 33 28l7 18 6 160q0 19 29 16l78-5q8 0 11 9l8 18 4 57-493 28-9-18z" fill="#343433" />
                            <path d="M425 500q0-10 7-13l80-4q32-5 33-34l-7-158q-1-28 20-33l191-8q23 0 25 25l5 160q3 32 42 31l78-4q9 0 11 9l3 56-491 26z" fill="#454543" />
                            <path d="M422 553l494-26 7 16-493 28z" fill="#2d2d2c" />
                            <path d="M774 272l4 170q4 20 22 24M780 270l5 175M911 470l4 56M906 466l5 60" fill="none" />
                            <path d="M421 500l1 53" fill="none" stroke="#666" />
                            <ellipse cx="452" cy="561" rx="12" ry="2" fill="#242424" />
                            <ellipse cx="484" cy="559" rx="20" ry="3" fill="#242424" />
                            <ellipse cx="499" cy="553" rx="12" ry="1" fill="#242424" />
                            <ellipse cx="502" cy="563" rx="11" ry="2" fill="#242424" />
                            <ellipse cx="857" cy="539" rx="20" ry="2" fill="#444" />
                            <ellipse cx="890" cy="537" rx="14" ry="2" fill="#444" />
                        </g>
                        <path d="M602 543l90-5" stroke="#aaa" stroke-width=".7" stroke-dasharray="3 9" />

                        <!-- bolt holes -->
                        {#each holes as h}
                            <g stroke="#131313" stroke-width=".8">
                                <circle cx={h.x} cy={h.y} r={h.r} fill="#4c4c4a" />
                                <circle cx={h.x} cy={h.y} r={h.r - 3} fill="#323231" />
                                <circle cx={h.x + 1} cy={h.y + 2} r={h.r - 5} fill="#464644" />
                                <circle cx={h.ix} cy={h.iy} r={h.ir} fill="#2a2a2a" />
                                <ellipse cx={h.wx} cy={h.wy} rx={h.rx} ry={h.ry} fill="url(#gap)" />
                            </g>
                        {/each}

                        <!-- knob and its shaft -->
                        <path d="M788 342h26v29h-25z" fill="url(#shaft)" />
                        <path d="M817 324h23l4 6 1 20v30l-5 6h-23l-5-8v-51z" fill="url(#knob)" stroke="#075c08" />
                        <path d="M817 324q-2 30 0 62M840 324l2 30-2 32" fill="none" stroke="#064f07" />

                        <!-- chuck disc -->
                        <g stroke="#222" stroke-width=".7">
                            <ellipse cx="657" cy="345" rx="120" ry="122" fill="url(#rim)" />
                            <path d="M737 255q44 40 39 100-2 35-25 67l-10-7q26-32 26-72-1-44-35-80z" fill="url(#rimSide)" stroke="none" />
                            <ellipse cx="655" cy="345" rx="117" ry="116" fill="none" stroke="#666" />
                            <ellipse cx="655" cy="342" rx="112" ry="111" fill="#a5a5a1" />
                        </g>

                        <!-- grooves -->
                        <g stroke="#333" stroke-width=".7">
                            <path d="M550 317h75v11h-75zM542 366h102l-8-9h-65z" fill="#a1a19e" />
                            <path d="M585 330h20v27h-20z" fill="#3d3d3b" />
                            <path d="M605 330h30l-3 27h-28z" fill="#aaaaa9" />
                            <path d="M672 265l-18 33 10 10 20-36zM717 285l-33 56 2 0 51-85z" fill="#aeaeab" />
                            <path d="M685 270l-16 26q12 2 23 12l16-24z" fill="#3b3b3a" />
                            <path d="M669 296q15 2 23 12l-12 20-15-12z" fill="#aaa9aa" />
                            <path d="M643 369l43-27 35 64-34-12-15 25z" fill="#a1a19e" />
                            <path d="M656 373l27-18 20 39h-16l-11 14z" fill="#afafb0" />
                            <path d="M671 399q13 0 25-15l7 10h-16l-11 14z" fill="#414140" />
                            <path d="M686 340l40 69" fill="none" />
                            <circle cx="656" cy="344" r="29" fill="#3a3a38" />
                        </g>

                        <!-- jaws -->
                        <g stroke="#111" stroke-width=".8" stroke-linejoin="round">
                            <path d="M479 316l41-2 38-2h14l13 21 3 8-1 9-13 16-95 3q-6-28 0-53z" fill="#2e2e2d" />
                            <path d="M479 316l41-2 38-2h14l13 21v11l-14 20-92 1q-6-26 0-49z" fill="#454543" />
                            <path d="M520 314q-6 25 0 51M558 313q-13 25 0 52" fill="none" />
                            <path d="M723 178q29 6 43 25l-1 6-48 77-22 3-8-6-14-26 5-12 22-34z" fill="#2c2c2b" />
                            <path d="M723 178q29 6 42 25l-43 66-7 11-29-2-13-21 5-12 22-34z" fill="#454543" />
                            <path d="M700 211q28 4 43 26M679 244q28-4 43 26" fill="none" />
                            <path d="M687 394h26l8 12 43 77q-17 17-42 24l-50-88z" fill="#454543" />
                            <path d="M679 431q25 0 42-25M700 467q22-3 41-24" fill="none" stroke-width="1.500" />
                            <path d="M722 507l-3-6q23-7 43-22l2 4q-17 17-42 24z" fill="#2b2b2a" />
                        </g>

                        <g class="mark">
                            <text x="550" y="375" transform="rotate(-80 554 372)">2</text>
                            <text x="676" y="244">3</text>
                            <path d="M728 407l4 5 1-3" fill="none" stroke="#222" />
                        </g>

                        <!-- selected cylinder -->
                        <path d="M598 268l31 83a27 27 0 0 0 53-17l-32-82z" fill="url(#pipe)" />
                        <path d="M598 268l31 83a27 27 0 0 0 53-17l-32-82z" fill="url(#mesh)" />
                        <path d="M629 351a27 27 0 0 0 53-17" fill="none" stroke="#1fd04f" stroke-width="1.500" />
                        <circle cx="655" cy="343" r="27" fill="none" stroke="#19a878" stroke-dasharray="8 3" stroke-width=".8" />
                        <circle cx="624" cy="260" r="26" fill="#1b78c6" stroke="#16d13c" stroke-width="1.500" />

                        <path d="M619 325l-5 17h14M668 305l10 8" fill="none" stroke="#6a63a8" stroke-dasharray="4 2" />
                        <text x="684" y="346" class="ghost">0.00°</text>

                        <!-- measured distance -->
                        <path d="M647 322l18 38M675 376l11 20" stroke="#ff0" stroke-width="2" />
                        <path d="M649 334h7v7h-7z" fill="#ff0" />
                        <circle cx="686" cy="396" r="3" fill="#ff0" />
                        <text x="653" y="371" class="value">14.005</text>
                        <path d="M685 438l6 4-6 4z" fill="#2fd7a2" />
                        <path d="M702 457v7l-5-4z" fill="#1414b4" />
                        <g class="constraint">
                            <text x="638" y="307">Co *</text>
                            <text x="647" y="330">Co *</text>
                            <text x="716" y="397">M *</text>
                            <text x="695" y="486">M *</text>
                        </g>

                        <!-- axis triad -->
                        <path d="M265 654v-10" stroke="#181890" stroke-width="2" />
                        <path d="M262 646l3-8 3 8z" fill="#181890" />
                        <path d="M265 653h7" stroke="#a33" stroke-width="2" />
                        <path d="M271 650l8 2-8 3z" fill="#a33" />
                        <path d="M260 652l5 3 2-4" fill="none" stroke="#3c3" />
                        <text x="263" y="635" class="axis z">Z</text>
                        <text x="283" y="653" class="axis x">X</text>
                    </svg>
                </div>
            </div>
        </div>

        <aside class="catalog">
            <div class="panel-title">
                <span>Catalog Browser</span>
                {@render icon("pinSmall", 8)}
                {@render icon("close", 8)}
            </div>
            <div class="find">
                <button class="back" aria-label="Back">{@render icon("back", 10)}</button>
                <input type="text" aria-label="Find shape" />
                <button class="clear" aria-label="Clear">{@render icon("redX", 11)}</button>
            </div>
            <div class="shelf">
                <ul>
                    {#each shapes as shape}
                        <li>
                            <svg width="20" height="20" viewBox="0 0 20 20" aria-hidden="true">{@html shape.art}</svg>
                            <span>{shape.name}</span>
                        </li>
                    {/each}
                </ul>
                <div class="scroll-y">
                    <svg width="8" height="6"><path d="M1 4.500l3-3 3 3" fill="none" stroke="#333" /></svg>
                    <div class="thumb"></div>
                    <svg width="8" height="6"><path d="M1 1.500l3 3 3-3" fill="none" stroke="#333" /></svg>
                </div>
            </div>
            <div class="panel-tabs">
                <button class="active">Shapes</button>
                <button>Advshaps</button>
                <button>FlexShapes</button>
                <button>SheetMtl</button>
                <i class="arrow"></i>
            </div>
        </aside>
    </main>

    <footer class="status">
        <p>Pick point on shape for start or pick linear edge. Press CTRL key to select Anchor. Press SHFT key for center of ellipse.</p>
        <span class="view-size">View size: 1287 x&nbsp; 814</span>
        <span class="units">Units: mm, deg</span>
        <div class="view-tools">
            {#each viewTools as tool}
                <button class:on={tool.on} aria-label={tool.icon}>
                    {@render icon(tool.icon)}
                    {#if tool.arrow}<i class="arrow"></i>{/if}
                </button>
            {/each}
        </div>
        <select class="any" aria-label="Selection filter"><option>Any</option></select>
        <select class="config" aria-label="Configuration"><option>Default</option></select>
        <button aria-label="Structure">{@render icon("org", 12)}</button>
    </footer>

    <div class="taskbar">
        <button class="start" aria-label="Start">{@render icon("windows", 13)}</button>
        <label class="ask">
            {@render icon("ring", 16)}
            <input type="text" placeholder="Ask me anything" aria-label="Ask me anything" />
            {@render icon("mic", 13)}
        </label>
        {#each apps as app}
            <button class="app-button" class:running={app.running} class:current={app.active} aria-label={app.icon}>{@render icon(app.icon, 16)}</button>
        {/each}
        <div class="tray">
            {@render icon("up", 10)}
            {@render icon("net", 12)}
            <span>DEU</span>
            <time>3:39 PM<br />1/30/2017</time>
            {@render icon("notice", 14)}
        </div>
    </div>
</div>

<style>
    :global(body) {
        margin: 0;
        overflow: hidden;
    }

    .app {
        display: flex;
        flex-direction: column;
        height: 100vh;
        font: 8px/12px Lato, "Open Sans", sans-serif;
        color: #33465f;
        background: #b9cce4;
    }

    button,
    input,
    select {
        font: inherit;
        color: inherit;
        margin: 0;
        padding: 0;
        border: 0;
        background: none;
        border-radius: 0;
        min-width: 0;
    }

    ul {
        list-style: none;
        margin: 0;
        padding: 0;
    }

    svg {
        display: block;
        flex: none;
    }

    button {
        white-space: nowrap;
    }

    h1,
    h2,
    p {
        margin: 0;
        font-size: inherit;
        font-weight: 400;
    }

    .arrow {
        flex: none;
        width: 0;
        height: 0;
        border: 2px solid transparent;
        border-top-color: #4c5a6b;
        border-bottom: 0;
    }

    .on {
        background: linear-gradient(#fce49b, #fbd362);
        box-shadow: inset 0 0 0 1px #cfa443;
    }

    /* title and ribbon tabs */

    header {
        display: flex;
        background: linear-gradient(#fefefe 30%, #f2f3f2 70%, #fafbfa);
        height: 37px;
    }

    .logo {
        width: 32px;
        padding: 8px 0 0 6px;
        box-sizing: border-box;
    }

    .head-rows {
        flex: 1;
        min-width: 0;
    }

    .title-row {
        display: flex;
        align-items: center;
        height: 20px;
    }

    .quick {
        display: flex;
        align-items: center;
        justify-content: space-between;
        margin: 0 12px 0 3px;
        width: 284px;
    }

    .quick button {
        flex: 0 1 15px;
        height: 15px;
        display: grid;
        place-items: center;
    }

    .more {
        margin-left: 8px;
    }

    h1 {
        flex: 1;
        text-align: center;
        color: #333;
    }

    .window-buttons {
        display: flex;
    }

    .window-buttons button {
        width: 30px;
        height: 20px;
        display: grid;
        place-items: center;
    }

    .ribbon-tabs {
        display: flex;
        height: 17px;
    }

    .ribbon-tabs > button {
        padding: 0 10px 0 9px;
    }

    .ribbon-tabs > button:first-child {
        padding-left: 10px;
    }

    .ribbon-tabs > .active {
        background: #f2f7fd;
        border: 1px solid #b4c5da;
        border-bottom: 0;
        border-radius: 2px 2px 0 0;
    }

    .styles {
        display: flex;
        align-items: center;
        gap: 5px;
        margin-left: auto;
        padding-right: 3px;
        color: #333;
    }

    /* ribbon */

    .ribbon {
        display: flex;
        height: 63px;
        border-top: 1px solid #c3d0df;
        border-bottom: 1px solid #9db0c8;
        box-sizing: border-box;
        background: linear-gradient(#eaf3fb, #dde8f4 50%, #d3e1ee);
    }

    .group {
        display: flex;
        flex-direction: column;
        border-right: 1px solid #a9bbd1;
        padding: 3px 3px 0 5px;
        box-sizing: border-box;
    }

    .items {
        display: grid;
        align-items: start;
        height: 46px;
    }

    .dimension {
        width: 239px;
    }

    .dimension .items {
        grid-template-columns: 42px 52px 50px 54px 33px;
    }

    .pmi {
        width: 326px;
    }

    .pmi .items {
        grid-template-columns: 38px 90px 89px 66px 34px;
    }

    .text {
        width: 239px;
    }

    .text .items {
        grid-template-columns: 26px 1fr;
        gap: 6px;
    }

    .cog {
        width: 154px;
    }

    .cog .items {
        grid-template-columns: 87px 58px;
    }

    h2 {
        text-align: center;
    }

    .large {
        display: flex;
        flex-direction: column;
        align-items: center;
        gap: 2px;
        height: 46px;
        line-height: 10px;
        padding-top: 2px;
        border-radius: 2px;
    }

    .stack {
        display: flex;
        flex-direction: column;
        gap: 3px;
    }

    .small {
        display: flex;
        align-items: center;
        gap: 1px;
        height: 12px;
    }

    .small .arrow {
        margin-left: 3px;
    }

    .small:disabled {
        opacity: 0.5;
    }

    select {
        appearance: none;
        box-sizing: border-box;
        height: 14px;
        padding: 0 3px;
        color: #8793a2;
        border: 1px solid #d2dfed;
        background:
            linear-gradient(#667, #667) right 4px center / 3px 1px no-repeat,
            linear-gradient(#667, #667) right 5px bottom 4px / 1px 1px no-repeat,
            #ecf4fc;
    }

    .font-box {
        padding-top: 4px;
    }

    .font-row {
        display: flex;
        align-items: center;
        margin-bottom: 6px;
    }

    .font-row button {
        width: 16px;
        display: grid;
        place-items: center;
        font-family: "Liberation Serif", serif;
        font-size: 10px;
    }

    .font-row .grow {
        font-size: 12px;
    }

    .font-row .shrink {
        font-size: 8px;
    }

    .family {
        width: 117px;
    }

    .size {
        width: 80px;
    }

    .color {
        width: 60px;
        margin-left: 8px;
    }

    .menu-bar {
        display: flex;
        align-items: center;
        gap: 10px;
        height: 20px;
        padding-left: 11px;
    }

    /* work area */

    main {
        display: flex;
        flex: 1;
        min-height: 0;
    }

    .documents {
        display: flex;
        flex-direction: column;
        flex: 1;
        min-width: 0;
    }

    .doc-tabs {
        display: flex;
        align-items: flex-end;
        height: 14px;
        background: linear-gradient(#e2ecf8, #f0f6fd);
        border-top: 1px solid #98acc8;
        box-sizing: border-box;
    }

    .doc {
        height: 13px;
        border-top: 1px solid #6d87a6;
        background: #dfeaf7;
    }

    .doc.active {
        display: flex;
        align-items: center;
        gap: 8px;
        padding-right: 4px;
        font-weight: 700;
        color: #222;
        background: #fff;
        border-right: 1px solid #6d87a6;
    }

    .doc-tabs > .arrow {
        margin: 0 5px 5px auto;
    }

    .work {
        display: flex;
        flex: 1;
        min-height: 0;
    }

    .scene {
        display: flex;
        flex-direction: column;
        width: 241px;
        padding: 0 6px 0 1px;
        box-sizing: border-box;
    }

    .panel-title {
        display: flex;
        align-items: center;
        gap: 5px;
        height: 13px;
        padding: 0 1px;
        background: linear-gradient(#b7cae5, #cbdbf1);
    }

    .panel-title span {
        flex: 1;
    }

    .find {
        display: flex;
        align-items: center;
        height: 13px;
        margin: 2px 0 1px;
        background: #fff;
    }

    .find input {
        flex: 1;
        height: 12px;
    }

    .find button {
        width: 13px;
        height: 13px;
        display: grid;
        place-items: center;
        background: #dfe8f2;
    }

    .find .clear {
        background: #f7dfdc;
        box-shadow: inset 0 0 0 1px #c9c0c4;
    }

    .tree {
        flex: 1;
        padding-left: 3px;
        overflow: hidden;
        color: #333;
        background: #fff;
        border: 1px solid #98acc8;
        border-bottom: 0;
    }

    .root,
    li {
        white-space: nowrap;
    }

    .root {
        display: flex;
        align-items: center;
        gap: 3px;
        height: 12px;
    }

    .tree li {
        display: flex;
        align-items: center;
        gap: 3px;
        height: 12px;
        padding-left: 3px;
    }

    .expand {
        width: 7px;
        height: 7px;
        color: #777;
        font-size: 7px;
        line-height: 5px;
        border: 1px solid #bbb;
        box-sizing: border-box;
    }

    .scroll-x {
        display: flex;
        align-items: center;
        gap: 2px;
        height: 11px;
        padding: 0 4px;
        background: #f0f0f0;
    }

    .scroll-x .thumb {
        width: 195px;
        height: 9px;
        margin-right: auto;
        background: #c8c8c8;
    }

    .panel-tabs {
        display: flex;
        align-items: center;
        height: 16px;
        padding-left: 2px;
        border-top: 1px solid #7389a8;
    }

    .panel-tabs button {
        display: flex;
        align-items: center;
        gap: 1px;
        height: 13px;
        padding: 0 2px;
    }

    .panel-tabs .active {
        background: #f2f7fd;
    }

    .scene .panel-tabs {
        gap: 3px;
    }

    .viewport {
        flex: 1;
        min-width: 0;
        background: linear-gradient(#5a7da7, #8fa7c8 33%, #cbd5e3 70%, #eff2f6 92%, #fefefe);
    }

    .viewport > svg {
        width: 100%;
        height: 100%;
    }

    .mark text {
        font: 10px "Liberation Sans", sans-serif;
        fill: #111;
    }

    .constraint text {
        font: 13px "Liberation Serif", serif;
        fill: #2fe0a8;
    }

    .value {
        font: 11px "Liberation Sans", sans-serif;
        fill: #e5e540;
    }

    .ghost {
        font: italic 10px "Liberation Sans", sans-serif;
        fill: #7770ad;
    }

    .axis {
        font: 7px "Liberation Sans", sans-serif;
    }

    .x {
        fill: #c44;
    }

    .z {
        fill: #33a;
    }

    /* catalog */

    .catalog {
        display: flex;
        flex-direction: column;
        width: 182px;
        padding: 0 2px 0 5px;
        box-sizing: border-box;
        border-top: 1px solid #98acc8;
    }

    .catalog .find {
        height: 12px;
        margin: 1px 0;
    }

    .catalog .find button {
        height: 12px;
    }

    .shelf {
        display: flex;
        flex: 1;
        min-height: 0;
        background: #fff;
        border-top: 1px solid #98acc8;
    }

    .shelf ul {
        flex: 1;
        display: grid;
        grid-template-columns: repeat(3, 50px);
        grid-auto-rows: 50px;
        align-content: start;
        overflow: hidden;
        color: #333;
    }

    .shelf li {
        display: flex;
        flex-direction: column;
        align-items: center;
        gap: 2px;
        padding-top: 1px;
    }

    .scroll-y {
        display: flex;
        flex-direction: column;
        align-items: center;
        gap: 3px;
        width: 10px;
        padding: 3px 0;
        box-sizing: border-box;
        background: #f0f0f0;
    }

    .scroll-y .thumb {
        width: 10px;
        height: 85%;
        margin-bottom: auto;
        background: #c8c8c8;
    }

    .catalog .panel-tabs {
        gap: 4px;
    }

    .catalog .panel-tabs .arrow {
        margin-left: auto;
        margin-right: 4px;
    }

    /* status bar */

    .status {
        display: flex;
        align-items: center;
        height: 17px;
        border-top: 1px solid #dce8f6;
        box-sizing: border-box;
        background: linear-gradient(#d7e3f2, #b4c5db);
    }

    .status p {
        flex: 1;
        padding-left: 1px;
    }

    .view-size {
        padding: 0 19px 0 32px;
        border-left: 1px solid #9eb1ca;
    }

    .view-tools {
        display: flex;
        align-items: center;
        margin: 0 3px 0 8px;
        gap: 4px;
    }

    .view-tools button {
        display: flex;
        align-items: center;
        gap: 2px;
        height: 14px;
    }

    .status .any {
        width: 59px;
    }

    .status .config {
        width: 43px;
        margin: 0 3px 0 1px;
    }

    /* taskbar */

    .taskbar {
        display: flex;
        height: 27px;
        color: #eee;
        background: #020304;
    }

    .start {
        width: 32px;
        display: grid;
        place-items: center;
    }

    .ask {
        display: flex;
        align-items: center;
        gap: 2px;
        width: 229px;
        padding: 0 7px 0 5px;
        box-sizing: border-box;
        background: #2d2d2e;
    }

    .ask input {
        flex: 1;
        font-size: 10px;
    }

    .ask input::placeholder {
        color: #a5a5a5;
    }

    .app-button {
        width: 33px;
        display: grid;
        place-items: center;
        border: solid transparent;
        border-width: 2px 0;
    }

    .running {
        border-bottom-color: #76a9d8;
    }

    .current {
        background: #37393c;
    }

    .tray {
        display: flex;
        align-items: center;
        gap: 7px;
        margin-left: auto;
        padding-right: 15px;
    }

    .tray time {
        width: 42px;
        text-align: center;
    }
</style>
